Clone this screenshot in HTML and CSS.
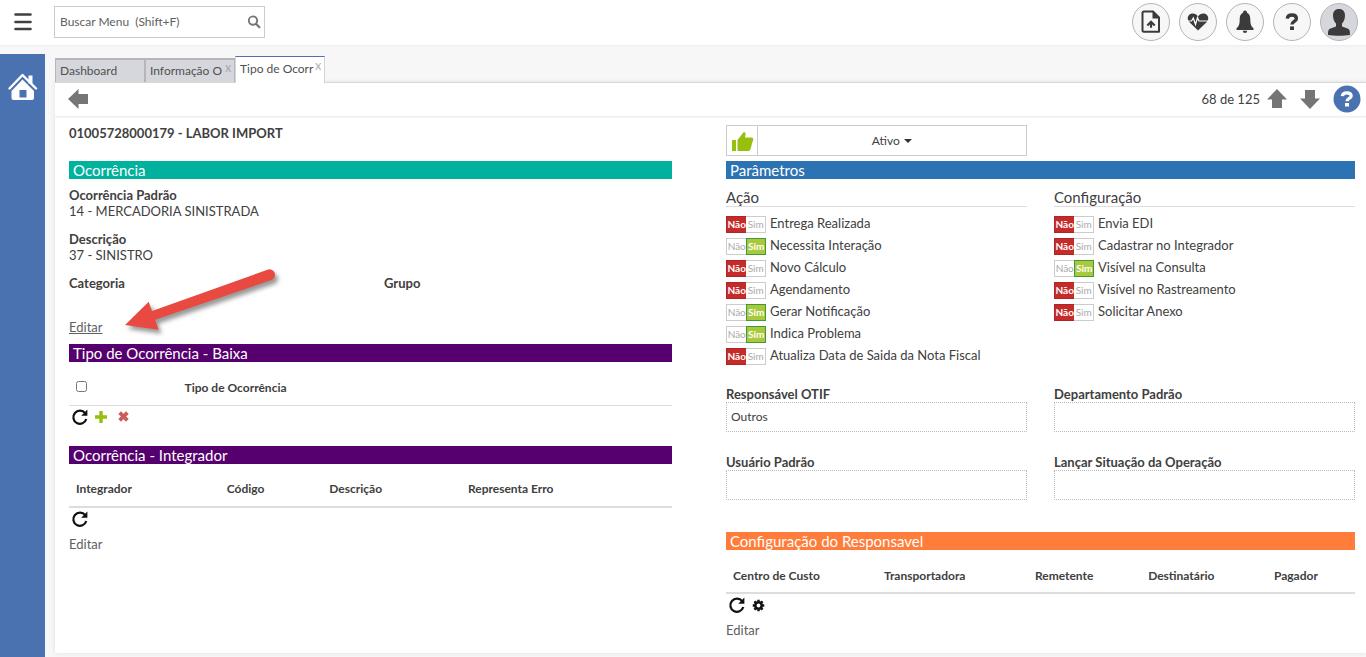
FILE: index.html
```html
<!DOCTYPE html>
<html lang="pt-BR">
<head>
<meta charset="utf-8">
<title>Tipo de Ocorrência</title>
<link rel="stylesheet" href="styles.css">
</head>
<body>
<svg class="defs" aria-hidden="true">
  <symbol id="refresh" viewBox="0 0 18 18"><path d="M14.2 5.2A6.6 6.6 0 1 0 15.3 11" fill="none" stroke="#111" stroke-width="2.2"/><path d="M16.4 1.6v6.2h-6.2z" fill="#111"/></symbol>
</svg>
<header class="top">
  <button class="plain" aria-label="Menu"><svg width="18" height="18" viewBox="0 0 18 18"><path d="M1.5 1.5h15M1.5 9h15M1.5 16h15" stroke="#404040" stroke-width="2.6" stroke-linecap="round"/></svg></button>
  <div class="search">
    <input type="text" aria-label="Buscar Menu" placeholder="Buscar Menu  (Shift+F)">
    <svg width="14" height="14" viewBox="0 0 14 14"><circle cx="6" cy="5.6" r="4.2" fill="none" stroke="#757575" stroke-width="1.9"/><path d="M9 8.8l3.4 3.4" stroke="#757575" stroke-width="2.2" stroke-linecap="round"/></svg>
  </div>
  <nav class="round-group">
    <button class="round" aria-label="Enviar arquivo"><svg width="22" height="26" viewBox="0 0 22 26"><path d="M4 2.500h9l6 6v14.200H4a1.500 1.500 0 0 1-1.500-1.500V4A1.500 1.500 0 0 1 4 2.500z" fill="none" stroke="#3b3b3b" stroke-width="2" stroke-linejoin="round"/><path d="M12.500 2l7.500 7.500h-7.500z" fill="#3b3b3b"/><path d="M11 18.800v-5.800M7.300 16.600L11 12.800l3.700 3.800" fill="none" stroke="#3b3b3b" stroke-width="2.200"/></svg></button>
    <button class="round" aria-label="Saúde"><svg width="22" height="20" viewBox="0 0 22 20"><path d="M11 18.500L2.200 10C-1 6.200 1.500 1.500 5.500 1.500c2.500 0 4.300 1.300 5.500 3 1.200-1.700 3-3 5.500-3 4 0 6.500 4.700 3.300 8.500z" fill="#3b3b3b"/><path d="M0 9h4.500l1.800-3 2.200 6.500 2-7 1.500 3.500h10" fill="none" stroke="#fff" stroke-width="1.200"/></svg></button>
    <button class="round" aria-label="Notificações"><svg width="18" height="24" viewBox="0 0 18 24"><circle cx="9" cy="2.500" r="2" fill="#3b3b3b"/><path d="M9 2.500c4 0 5.300 3.200 5.300 7 0 4.300.7 7 3.200 8.700v1.700H.5v-1.700c2.500-1.700 3.200-4.400 3.200-8.700 0-3.800 1.300-7 5.300-7z" fill="#3b3b3b"/><path d="M6.800 20.700h4.400a2.200 2.200 0 0 1-4.400 0z" fill="#3b3b3b"/></svg></button>
    <button class="round" aria-label="Ajuda"><svg width="14" height="18" viewBox="0 0 14 18"><path d="M2.300 5.600C2.500 3 4.300 2 6.900 2c2.700 0 4.500 1.300 4.500 3.500 0 3-4.400 2.800-4.400 6" fill="none" stroke="#3b3b3b" stroke-width="3.400"/><path d="M5 13.400h4V17H5z" fill="#3b3b3b"/></svg></button>
    <button class="round user" aria-label="Usuário"><svg width="24" height="28" viewBox="0 0 24 28"><path d="M12 1c4 0 6.200 2.700 6 7-.2 3.500-1.500 6-3 7.500v3l5.500 2c2 .8 2.500 2 2.500 6.500-6.500 1-15.500 1-22 0 0-4.500.5-5.700 2.500-6.500l5.500-2v-3C7.500 14 6.200 11.500 6 8c-.2-4.300 2-7 6-7z" fill="#3d3a3b"/></svg></button>
  </nav>
</header>
<div class="shell">
  <aside class="side">
    <a href="#" aria-label="Início"><svg width="30" height="30" viewBox="0 0 30 30"><path d="M20.500 3.500h4v8h-4z" fill="#fff"/><path d="M1.500 16.500L14.500 3 28 16.500" fill="none" stroke="#fff" stroke-width="2.400" stroke-linecap="round" stroke-linejoin="round"/><path d="M14.500 7.500L26 19v7a2 2 0 0 1-2 2H5.500a2 2 0 0 1-2-2v-7z" fill="#fff"/><rect x="11.500" y="18" width="7" height="7.500" fill="#4a72b0"/></svg></a>
  </aside>
  <main class="work">
    <nav class="tabs">
      <div class="tab"><a href="#">Dashboard</a></div>
      <div class="tab"><a href="#">Informação O</a><button class="close" aria-label="Fechar">X</button></div>
      <div class="tab active"><a href="#">Tipo de Ocorr</a><button class="close" aria-label="Fechar">X</button></div>
    </nav>
    <section class="panel">
      <div class="toolbar">
        <button class="plain" aria-label="Voltar"><svg width="20" height="20" viewBox="0 0 20 20"><path d="M0 10L10.500 0v5H20v10h-9.500v5z" fill="#757575"/></svg></button>
        <span class="count">68 de 125</span>
        <button class="plain" aria-label="Anterior"><svg width="20" height="20" viewBox="0 0 20 20"><path d="M10 0L20 10.500h-5V19H5v-8.500H0z" fill="#757575"/></svg></button>
        <button class="plain" aria-label="Próximo"><svg width="20" height="20" viewBox="0 0 20 20"><path d="M10 20L0 9.500h5V1h10v8.500h5z" fill="#757575"/></svg></button>
        <button class="plain" aria-label="Ajuda da tela"><svg width="28" height="28" viewBox="0 0 28 28"><circle cx="14" cy="14" r="13.500" fill="#4a72b0"/><path d="M9.300 11.200c.2-2.500 2-3.400 4.600-3.400 2.700 0 4.300 1.200 4.300 3.100 0 2.700-4.200 2.400-4.200 5.300" fill="none" stroke="#fff" stroke-width="3.200"/><path d="M12 18h4v3.500h-4z" fill="#fff"/></svg></button>
      </div>
      <div class="columns">
        <div>
          <h1>01005728000179 - LABOR IMPORT</h1>
          <h2 class="bar teal">Ocorrência</h2>
          <dl class="facts">
            <div><dt>Ocorrência Padrão</dt><dd>14 - MERCADORIA SINISTRADA</dd></div>
            <div><dt>Descrição</dt><dd>37 - SINISTRO</dd></div>
            <div class="pair"><dt>Categoria</dt><dt>Grupo</dt></div>
          </dl>
          <div class="edit-spot">
            <a class="edit under" href="#">Editar</a>
            <svg class="pointer" width="158" height="76" viewBox="0 0 158 76"><path d="M5 61L28.700 37.700 32 47 147.500 5.700a5.500 5.500 0 0 1 4 10.300L35 55.700l3.700 10z" fill="#e84a42"/></svg>
          </div>
          <h2 class="bar purple">Tipo de Ocorrência - Baixa</h2>
          <table class="grid thin">
            <colgroup><col class="c-check"><col></colgroup>
            <tr><th><input type="checkbox" aria-label="Selecionar todos"></th><th>Tipo de Ocorrência</th></tr>
          </table>
          <div class="actions gap-after">
            <button class="plain" aria-label="Atualizar"><svg width="18" height="18"><use href="#refresh"/></svg></button>
            <button class="plain" aria-label="Adicionar"><svg width="12" height="12" viewBox="0 0 12 12"><path d="M4.300 0h3.400v4.300H12v3.400H7.700V12H4.300V7.700H0V4.300h4.300z" fill="#97bf0d"/></svg></button>
            <button class="plain spaced" aria-label="Remover"><svg width="11" height="11" viewBox="0 0 10 10"><path d="M1.500 1.500l7 7M8.500 1.500l-7 7" stroke="#cd5c5c" stroke-width="3.400"/></svg></button>
          </div>
          <h2 class="bar purple">Ocorrência - Integrador</h2>
          <table class="grid">
            <colgroup><col class="i1"><col class="i2"><col class="i3"><col></colgroup>
            <tr><th>Integrador</th><th>Código</th><th>Descrição</th><th>Representa Erro</th></tr>
          </table>
          <div class="actions"><button class="plain" aria-label="Atualizar"><svg width="18" height="18"><use href="#refresh"/></svg></button></div>
          <a class="edit" href="#">Editar</a>
        </div>
        <div>
          <div class="status">
            <svg width="30" height="29" viewBox="0 0 30 29"><path d="M5 14h4v11H5z" fill="#97bf0d"/><path d="M10.500 14L16.500 6.200c2.500-.2 2.500 1.300 1.500 5.300h6.500c1.700 0 2 1.200 1.500 2.700L23.500 23c-.5 1.500-1 2-2.500 2H10.500z" fill="#97bf0d"/></svg>
            <button>Ativo<span class="caret"></span></button>
          </div>
          <h2 class="bar blue">Parâmetros</h2>
          <div class="halves switches">
            <div>
              <h3>Ação</h3>
              <label class="row"><span class="switch"><input type="checkbox"><span class="no">Não</span><span class="yes">Sim</span></span>Entrega Realizada</label>
              <label class="row"><span class="switch"><input type="checkbox" checked><span class="no">Não</span><span class="yes">Sim</span></span>Necessita Interação</label>
              <label class="row"><span class="switch"><input type="checkbox"><span class="no">Não</span><span class="yes">Sim</span></span>Novo Cálculo</label>
              <label class="row"><span class="switch"><input type="checkbox"><span class="no">Não</span><span class="yes">Sim</span></span>Agendamento</label>
              <label class="row"><span class="switch"><input type="checkbox" checked><span class="no">Não</span><span class="yes">Sim</span></span>Gerar Notificação</label>
              <label class="row"><span class="switch"><input type="checkbox" checked><span class="no">Não</span><span class="yes">Sim</span></span>Indica Problema</label>
              <label class="row"><span class="switch"><input type="checkbox"><span class="no">Não</span><span class="yes">Sim</span></span>Atualiza Data de Saida da Nota Fiscal</label>
            </div>
            <div>
              <h3>Configuração</h3>
              <label class="row"><span class="switch"><input type="checkbox"><span class="no">Não</span><span class="yes">Sim</span></span>Envia EDI</label>
              <label class="row"><span class="switch"><input type="checkbox"><span class="no">Não</span><span class="yes">Sim</span></span>Cadastrar no Integrador</label>
              <label class="row"><span class="switch"><input type="checkbox" checked><span class="no">Não</span><span class="yes">Sim</span></span>Visível na Consulta</label>
              <label class="row"><span class="switch"><input type="checkbox"><span class="no">Não</span><span class="yes">Sim</span></span>Visível no Rastreamento</label>
              <label class="row"><span class="switch"><input type="checkbox"><span class="no">Não</span><span class="yes">Sim</span></span>Solicitar Anexo</label>
            </div>
          </div>
          <div class="halves fields">
            <label class="field">Responsável OTIF<input type="text" value="Outros" readonly></label>
            <label class="field">Departamento Padrão<input type="text" readonly></label>
            <label class="field">Usuário Padrão<input type="text" readonly></label>
            <label class="field">Lançar Situação da Operação<input type="text" readonly></label>
          </div>
          <h2 class="bar orange">Configuração do Responsavel</h2>
          <table class="grid">
            <colgroup><col class="r1"><col class="r2"><col class="r3"><col class="r4"><col></colgroup>
            <tr><th>Centro de Custo</th><th>Transportadora</th><th>Remetente</th><th>Destinatário</th><th>Pagador</th></tr>
          </table>
          <div class="actions">
            <button class="plain" aria-label="Atualizar"><svg width="18" height="18"><use href="#refresh"/></svg></button>
            <button class="plain" aria-label="Configurar"><svg width="13" height="13" viewBox="0 0 14 14"><circle cx="7" cy="7" r="3.500" fill="none" stroke="#111" stroke-width="2.800"/><path d="M7 .8v2M7 11.200v2M.8 7h2M11.200 7h2M2.600 2.600L4 4M10 10l1.400 1.400M11.400 2.600L10 4M4 10l-1.400 1.400" stroke="#111" stroke-width="2.600"/></svg></button>
          </div>
          <a class="edit" href="#">Editar</a>
        </div>
      </div>
    </section>
  </main>
</div>
</body>
</html>
```
FILE: styles.css
```css
* { box-sizing: border-box; }
body {
  margin: 0;
  min-height: 100vh;
  display: flex;
  flex-direction: column;
  background: #f7f7f7;
  color: #404040;
  font: 13px/16px Lato, Carlito, Calibri, sans-serif;
}
h1, h2, h3, dl, dd { margin: 0; font-size: inherit; }
a { color: inherit; text-decoration: none; }
button, input { font: inherit; color: inherit; }
svg { display: block; flex: none; }
.defs { position: absolute; width: 0; height: 0; }
.plain { border: 0; padding: 0; background: none; }

.top {
  display: flex;
  align-items: center;
  height: 45px;
  padding: 0 8px 1px 14px;
  background: #fff;
  box-shadow: 0 1px 2px #ececec;
}
.search {
  display: flex;
  align-items: center;
  width: 211px;
  height: 32px;
  margin-left: 22px;
  padding: 0 3px 0 5px;
  border: 1px solid #ccc;
}
.search input {
  flex: 1;
  min-width: 0;
  border: 0;
  padding: 0;
  outline: 0;
  font-size: 12px;
  background: none;
}
.search input::placeholder { color: #606060; white-space: pre; }
.round-group { display: flex; gap: 9px; margin-left: auto; }
.round {
  display: grid;
  place-items: center;
  width: 38px;
  height: 38px;
  padding: 0;
  border: 1px solid #b4b4ba;
  border-radius: 50%;
  background: #f7f7f7;
}
.user { background: #d6d7dc; }

.shell { display: flex; flex: 1; padding-top: 9px; }
.side { width: 45px; padding: 18px 8px; background: #4a72b0; }
.work { flex: 1; min-width: 0; padding: 2px 0 4px 10px; }

.tabs { display: flex; align-items: flex-end; height: 26px; }
.tab {
  display: flex;
  width: 90px;
  height: 24px;
  padding: 3px 3px 0 4px;
  border: 1px solid #b5b6bb;
  border-top-width: 2px;
  border-bottom: 0;
  background: #d6d7dc;
  font-size: 12px;
  color: #505050;
}
.tab a { flex: 1; white-space: nowrap; }
.tab.active {
  position: relative;
  height: 27px;
  align-self: flex-start;
  padding-top: 4px;
  border: 1px solid #d5d5d5;
  border-top: 1px solid #4a72b0;
  border-bottom: 0;
  background: #fff;
}
.close {
  height: 12px;
  padding: 0;
  border: 0;
  background: none;
  font-size: 9px;
  line-height: 12px;
  color: #9a9ca8;
}

.panel {
  border-top: 1px solid #d5d5d5;
  background: #fff;
  box-shadow: 0 0 4px #ddd;
}
.toolbar {
  display: flex;
  align-items: center;
  gap: 13px;
  height: 34px;
  padding: 0 5px 1px 13px;
  border-bottom: 1px solid #eee;
  box-shadow: 0 1px 2px #f4f4f4;
}
.count { margin-left: auto; margin-right: -6px; }
.columns {
  display: grid;
  grid-template-columns: 603fr 629fr;
  gap: 54px;
  padding: 8px 11px 15px 14px;
}

h1 { height: 36px; }
.bar {
  height: 18px;
  padding-left: 4px;
  font-weight: 400;
  font-size: 15px;
  line-height: 18px;
  color: #fff;
}
.teal { background: #00b29e; }
.purple { background: #55006e; }
.blue { background: #2c73b3; }
.orange { background: #ff7c3a; }

.facts { display: grid; gap: 12px; padding-top: 8px; }
dt, h1, .field { font-weight: 700; }
.pair { display: grid; grid-template-columns: 315fr 288fr; }
.edit-spot { position: relative; padding: 28px 0 9px; }
.edit { display: inline-block; color: #606060; }
.under { text-decoration: underline; }
.pointer {
  position: absolute;
  left: 51px;
  top: -27px;
  filter: drop-shadow(3px 4px 2px #0006);
}

.grid {
  width: 100%;
  table-layout: fixed;
  border-collapse: collapse;
  border-bottom: 2px solid #ddd;
}
.thin { border-bottom-width: 1px; }
.grid th {
  height: 43px;
  padding: 9px 7px 0;
  text-align: left;
  font-size: 12px;
}
.grid input { display: block; width: 11px; height: 11px; margin: 0 0 2px; }
.c-check { width: 18%; }
.i1 { width: 25%; }
.i2 { width: 17%; }
.i3 { width: 23%; }
.r1 { width: 24%; }
.r2 { width: 24%; }
.r3 { width: 18%; }
.r4 { width: 20%; }
.actions {
  display: flex;
  align-items: center;
  gap: 6px;
  height: 22px;
  margin-bottom: 6px;
  padding-left: 2px;
}
.gap-after { margin-bottom: 18px; }
.spaced { margin-left: 5px; }

.halves { display: grid; grid-template-columns: 1fr 1fr; column-gap: 27px; }
.status {
  display: flex;
  width: calc(50% - 14px);
  height: 31px;
  margin-bottom: 5px;
  border: 1px solid #ccc;
}
.status button {
  flex: 1;
  display: flex;
  align-items: center;
  justify-content: center;
  gap: 4px;
  border: 0;
  border-left: 1px solid #ccc;
  background: none;
  font-size: 12px;
}
.caret { border: 4px solid transparent; border-top-color: #333; border-bottom: 0; }
.switches { padding-top: 9px; }
h3 {
  height: 19px;
  margin-bottom: 5px;
  border-bottom: 1px solid #ddd;
  font-weight: 400;
  font-size: 15px;
  line-height: 18px;
}
.row { display: flex; align-items: center; gap: 4px; height: 22px; }
.switch { position: relative; display: flex; width: 40px; height: 17px; margin-top: 2px; }
.switch input { position: absolute; inset: 0; width: 100%; height: 100%; margin: 0; opacity: 0; }
.switch span {
  display: grid;
  place-items: center;
  width: 20px;
  border: 1px solid #ccc;
  font-size: 10px;
  line-height: 15px;
  color: #aaa;
}
.switch .no { width: 21px; border-right: 0; }
.switch .yes { border-left: 0; }
.switch input:not(:checked) ~ .no { border-color: #b02626; background: #c52b2b; color: #fff; font-weight: 700; }
.switch input:checked ~ .yes { border: 1px solid #3f9a3f; background: #a9c93a; color: #fff; font-weight: 700; }

.fields { row-gap: 22px; padding: 20px 0 32px; }
.field { display: block; }
.field input {
  display: block;
  width: 100%;
  height: 30px;
  padding: 0 4px 2px;
  border: 1px dotted #bbb;
  outline: 0;
  background: none;
  font-weight: 400;
  font-size: 12px;
}
```
